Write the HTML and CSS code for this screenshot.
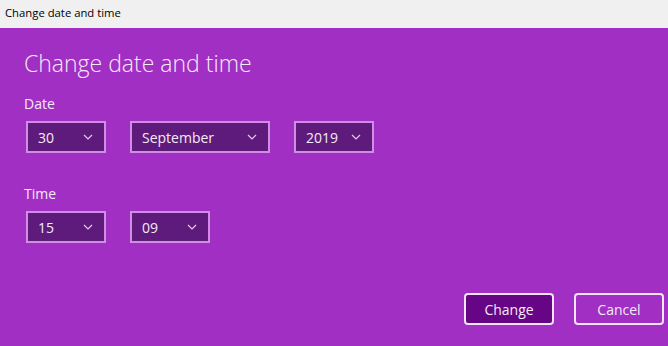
FILE: index.html
```html
<!DOCTYPE html>
<html>
<head>
<meta charset="utf-8">
<link rel="stylesheet" href="styles.css">
</head>
<body>
<div class="titlebar">Change date and time</div>
<div class="dialog">
  <h1 class="heading">Change date and time</h1>
  <div class="label">Date</div>
  <div class="row">
    <div class="select w80"><span>30</span><svg class="chev" width="10" height="6" viewBox="0 0 10 6"><path d="M1 1l4 4 4-4" fill="none" stroke="#e8c8f2" stroke-width="1.2"/></svg></div>
    <div class="select w140"><span>September</span><svg class="chev" width="10" height="6" viewBox="0 0 10 6"><path d="M1 1l4 4 4-4" fill="none" stroke="#e8c8f2" stroke-width="1.2"/></svg></div>
    <div class="select w80"><span>2019</span><svg class="chev" width="10" height="6" viewBox="0 0 10 6"><path d="M1 1l4 4 4-4" fill="none" stroke="#e8c8f2" stroke-width="1.2"/></svg></div>
  </div>
  <div class="label time">Time</div>
  <div class="row">
    <div class="select w80"><span>15</span><svg class="chev" width="10" height="6" viewBox="0 0 10 6"><path d="M1 1l4 4 4-4" fill="none" stroke="#e8c8f2" stroke-width="1.2"/></svg></div>
    <div class="select w80"><span>09</span><svg class="chev" width="10" height="6" viewBox="0 0 10 6"><path d="M1 1l4 4 4-4" fill="none" stroke="#e8c8f2" stroke-width="1.2"/></svg></div>
  </div>
  <div class="actions">
    <button class="btn primary">Change</button>
    <button class="btn">Cancel</button>
  </div>
</div>
</body>
</html>
```
FILE: styles.css
```css
* { box-sizing: border-box; }
html, body { margin: 0; padding: 0; }
body {
  width: 668px;
  height: 346px;
  overflow: hidden;
  font-family: "Open Sans", "Noto Sans", sans-serif;
  background: #a12fc3;
  display: flex;
  flex-direction: column;
}
.titlebar {
  height: 28px;
  background: #f0f0f0;
  color: #000;
  font-size: 11.3px;
  line-height: 26px;
  padding-left: 5px;
}
.dialog {
  flex: 1;
  padding: 19px 4px 0 26px;
  display: flex;
  flex-direction: column;
  color: #f6e9fa;
}
.heading {
  margin: 0 0 0 -2px;
  font-weight: 300;
  font-size: 23px;
  line-height: 33px;
  color: #f6e9fa;
}
.label {
  margin-top: 14px;
  margin-left: -2px;
  font-size: 14px;
  line-height: 20px;
  height: 20px;
}
.label.time { margin-top: 31px; }
.row {
  margin-top: 7px;
  display: flex;
  gap: 24px;
}
.select {
  height: 32px;
  border: 2px solid #cf8de4;
  background: #5f1b7b;
  display: flex;
  align-items: center;
  justify-content: space-between;
  padding: 0 11px 0 10px;
  font-size: 14px;
  color: #f6e9fa;
}
.w80 { width: 80px; }
.w140 { width: 140px; }
.chev { display: block; }
.actions {
  margin-top: 50px;
  display: flex;
  justify-content: flex-end;
  gap: 20px;
}
.btn {
  width: 90px;
  height: 32px;
  border: 2px solid #f4e4f8;
  border-radius: 4px;
  background: #a12fc3;
  color: #f6e9fa;
  font-family: "Open Sans", "Noto Sans", sans-serif;
  font-size: 14px;
  padding: 0;
}
.btn.primary { background: #660585; }
```
